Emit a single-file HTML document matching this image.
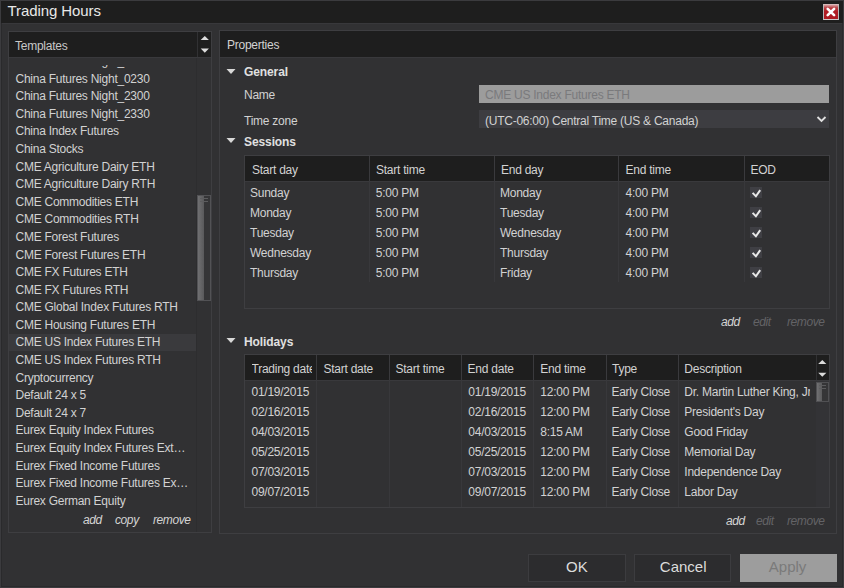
<!DOCTYPE html>
<html><head><meta charset="utf-8"><style>
*{box-sizing:border-box;margin:0;padding:0}
html,body{width:844px;height:588px;overflow:hidden;background:#3b3b3e}
body{position:relative;font-family:"Liberation Sans",sans-serif;font-size:12px;color:#d2d2d2;letter-spacing:-0.25px}
.a{position:absolute}
.t{position:absolute;white-space:nowrap;line-height:14px}
.b{font-weight:bold;color:#e0e0e0;letter-spacing:-0.1px}
.hdr{position:absolute;background:#1e1e1e}
.bd{position:absolute;background:#3e3e41}
.sep{position:absolute;width:1px;background:#3a3a3d}
.lnk{position:absolute;white-space:nowrap;line-height:14px;font-style:italic;letter-spacing:-0.4px}
.on{color:#d4d4d4}
.off{color:#636366}
.tri{position:absolute;width:10px;height:6px}
.cb{position:absolute;width:11.6px;height:11.6px;background:#3f3f44}
</style></head><body>
<div class="a" style="left:1px;top:1px;width:842px;height:586px;background:#2a2a2c"></div>
<div class="a" style="left:2px;top:1px;width:840px;height:585px;background:#313133"></div>
<div class="a" style="left:1px;top:1px;width:842px;height:22px;background:#1e1e1e"></div>
<div class="a" style="left:2px;top:23px;width:840px;height:1px;background:#38383b"></div>
<div class="t" style="left:7.6px;top:2.4px;font-size:15px;line-height:18px;letter-spacing:-0.1px;color:#e8e8e8">Trading Hours</div>
<div class="a" style="left:823px;top:4px;width:16px;height:16px;background:linear-gradient(#d7a0a2,#bb4146 20%,#b01d24 45%,#ad1b22);border:1px solid;border-color:#d8b8b9 #b9b9b9 #cbcbcb #b9b9b9"><svg width="14" height="14" style="position:absolute;left:0;top:0"><path d="M3.7 3.8L10.1 10.2M10.1 3.8L3.7 10.2" stroke="#fff" stroke-width="2.6" stroke-linecap="round"/></svg></div>
<div class="a" style="left:8px;top:31px;width:204px;height:502px;border:1px solid #3e3e41;background:#313133"></div>
<div class="hdr" style="left:9px;top:32px;width:188px;height:25px"></div>
<div class="hdr" style="left:198px;top:32px;width:13px;height:25px"></div>
<div class="a" style="left:9px;top:57px;width:202px;height:1px;background:#39393c"></div>
<div class="t" style="left:15px;top:39.3px;color:#c8c8c8">Templates</div>
<svg class="a" style="left:198px;top:32px" width="13" height="25"><path d="M2.7 8L6.8 3.9L10.9 8Z M2.7 16.6L6.8 20.7L10.9 16.6Z" fill="#dcdcdc"/></svg>
<div class="a" style="left:9px;top:65.4px;width:188px;height:466.6px;overflow:hidden">
<div class="t" style="left:6.5px;top:-11.34px">China Futures Night_0200</div>
<div class="t" style="left:6.5px;top:6.25px">China Futures Night_0230</div>
<div class="t" style="left:6.5px;top:23.84px">China Futures Night_2300</div>
<div class="t" style="left:6.5px;top:41.43px">China Futures Night_2330</div>
<div class="t" style="left:6.5px;top:59.02px">China Index Futures</div>
<div class="t" style="left:6.5px;top:76.61px">China Stocks</div>
<div class="t" style="left:6.5px;top:94.20px">CME Agriculture Dairy ETH</div>
<div class="t" style="left:6.5px;top:111.79px">CME Agriculture Dairy RTH</div>
<div class="t" style="left:6.5px;top:129.38px">CME Commodities ETH</div>
<div class="t" style="left:6.5px;top:146.97px">CME Commodities RTH</div>
<div class="t" style="left:6.5px;top:164.56px">CME Forest Futures</div>
<div class="t" style="left:6.5px;top:182.15px">CME Forest Futures ETH</div>
<div class="t" style="left:6.5px;top:199.74px">CME FX Futures ETH</div>
<div class="t" style="left:6.5px;top:217.33px">CME FX Futures RTH</div>
<div class="t" style="left:6.5px;top:234.92px">CME Global Index Futures RTH</div>
<div class="t" style="left:6.5px;top:252.51px">CME Housing Futures ETH</div>
<div class="a" style="left:0;top:268.15px;width:187px;height:17.59px;background:#3a3a3d"></div>
<div class="t" style="left:6.5px;top:270.10px">CME US Index Futures ETH</div>
<div class="t" style="left:6.5px;top:287.69px">CME US Index Futures RTH</div>
<div class="t" style="left:6.5px;top:305.28px">Cryptocurrency</div>
<div class="t" style="left:6.5px;top:322.87px">Default 24 x 5</div>
<div class="t" style="left:6.5px;top:340.46px">Default 24 x 7</div>
<div class="t" style="left:6.5px;top:358.05px">Eurex Equity Index Futures</div>
<div class="t" style="left:6.5px;top:375.64px">Eurex Equity Index Futures Ext…</div>
<div class="t" style="left:6.5px;top:393.23px">Eurex Fixed Income Futures</div>
<div class="t" style="left:6.5px;top:410.82px">Eurex Fixed Income Futures Ex…</div>
<div class="t" style="left:6.5px;top:428.41px">Eurex German Equity</div>
</div>
<div class="a" style="left:196px;top:58px;width:1px;height:474px;background:#2d2d2f"></div>
<div class="a" style="left:196.8px;top:195px;width:14.4px;height:105.7px;border:1px solid #525255;background:linear-gradient(90deg,#707072,#58585a 6.3px,#353537 6.3px)"></div>
<div class="a" style="left:200px;top:198px;width:8px;height:1px;background:#5c5c5e"></div>
<div class="a" style="left:200px;top:201px;width:8px;height:1px;background:#5c5c5e"></div>
<div class="lnk on" style="left:83px;top:513px">add</div>
<div class="lnk on" style="left:115px;top:513px">copy</div>
<div class="lnk on" style="left:153px;top:513px">remove</div>
<div class="a" style="left:219px;top:30px;width:618px;height:504px;border:1px solid #3e3e41;background:#313133"></div>
<div class="hdr" style="left:220px;top:31px;width:616px;height:26px"></div>
<div class="a" style="left:220px;top:57px;width:616px;height:1px;background:#39393c"></div>
<div class="t" style="left:227px;top:38.3px;color:#d2d2d2">Properties</div>
<svg class="a" style="left:226px;top:68.6px" width="10" height="6"><path d="M0.5 0L9.5 0L5 5Z" fill="#d8d8d8"/></svg>
<div class="t b" style="left:244px;top:64.7px">General</div>
<div class="t" style="left:244px;top:88.3px">Name</div>
<div class="t" style="left:244px;top:113.5px">Time zone</div>
<div class="a" style="left:478.5px;top:85px;width:350.8px;height:18.3px;background:#9c9c9c"></div>
<div class="t" style="left:485px;top:87.5px;color:#7a7a7c">CME US Index Futures ETH</div>
<div class="a" style="left:478.5px;top:110.2px;width:350.8px;height:17.6px;background:#3d3d41"></div>
<div class="t" style="left:485px;top:113.5px">(UTC-06:00) Central Time (US &amp; Canada)</div>
<svg class="a" style="left:815px;top:114px" width="13" height="11"><path d="M2.5 3L6.5 7L10.5 3" stroke="#e0e0e0" stroke-width="1.8" fill="none"/></svg>
<svg class="a" style="left:226px;top:138.4px" width="10" height="6"><path d="M0.5 0L9.5 0L5 5Z" fill="#d8d8d8"/></svg>
<div class="t b" style="left:244px;top:134.7px">Sessions</div>
<div class="a" style="left:244px;top:155px;width:586px;height:154px;border:1px solid #3e3e41"></div>
<div class="hdr" style="left:245px;top:156px;width:584px;height:25px"></div>
<div class="a" style="left:245px;top:181px;width:584px;height:1px;background:#39393c"></div>
<div class="sep" style="left:369px;top:156px;height:25px;background:#3a3a3d"></div>
<div class="sep" style="left:369px;top:181px;height:101px;background:#38383b"></div>
<div class="sep" style="left:494px;top:156px;height:25px;background:#3a3a3d"></div>
<div class="sep" style="left:494px;top:181px;height:101px;background:#38383b"></div>
<div class="sep" style="left:618px;top:156px;height:25px;background:#3a3a3d"></div>
<div class="sep" style="left:618px;top:181px;height:101px;background:#38383b"></div>
<div class="sep" style="left:744px;top:156px;height:25px;background:#3a3a3d"></div>
<div class="sep" style="left:744px;top:181px;height:101px;background:#38383b"></div>
<div class="t" style="left:252px;top:162.6px;color:#d2d2d2">Start day</div>
<div class="t" style="left:376px;top:162.6px;color:#d2d2d2">Start time</div>
<div class="t" style="left:501px;top:162.6px;color:#d2d2d2">End day</div>
<div class="t" style="left:625.5px;top:162.6px;color:#d2d2d2">End time</div>
<div class="t" style="left:750.5px;top:162.6px;color:#d2d2d2">EOD</div>
<div class="t" style="left:250px;top:185.7px">Sunday</div>
<div class="t" style="left:375.8px;top:185.7px">5:00 PM</div>
<div class="t" style="left:500px;top:185.7px">Monday</div>
<div class="t" style="left:625.5px;top:185.7px">4:00 PM</div>
<div class="cb" style="left:750.3px;top:186.5px"><svg width="12" height="12" style="position:absolute;left:0;top:0"><path d="M2.6 5.9L5.9 9.3L10.2 3.2" stroke="#e8e8e8" stroke-width="2" fill="none"/></svg></div>
<div class="t" style="left:250px;top:205.7px">Monday</div>
<div class="t" style="left:375.8px;top:205.7px">5:00 PM</div>
<div class="t" style="left:500px;top:205.7px">Tuesday</div>
<div class="t" style="left:625.5px;top:205.7px">4:00 PM</div>
<div class="cb" style="left:750.3px;top:206.5px"><svg width="12" height="12" style="position:absolute;left:0;top:0"><path d="M2.6 5.9L5.9 9.3L10.2 3.2" stroke="#e8e8e8" stroke-width="2" fill="none"/></svg></div>
<div class="t" style="left:250px;top:225.7px">Tuesday</div>
<div class="t" style="left:375.8px;top:225.7px">5:00 PM</div>
<div class="t" style="left:500px;top:225.7px">Wednesday</div>
<div class="t" style="left:625.5px;top:225.7px">4:00 PM</div>
<div class="cb" style="left:750.3px;top:226.5px"><svg width="12" height="12" style="position:absolute;left:0;top:0"><path d="M2.6 5.9L5.9 9.3L10.2 3.2" stroke="#e8e8e8" stroke-width="2" fill="none"/></svg></div>
<div class="t" style="left:250px;top:245.7px">Wednesday</div>
<div class="t" style="left:375.8px;top:245.7px">5:00 PM</div>
<div class="t" style="left:500px;top:245.7px">Thursday</div>
<div class="t" style="left:625.5px;top:245.7px">4:00 PM</div>
<div class="cb" style="left:750.3px;top:246.5px"><svg width="12" height="12" style="position:absolute;left:0;top:0"><path d="M2.6 5.9L5.9 9.3L10.2 3.2" stroke="#e8e8e8" stroke-width="2" fill="none"/></svg></div>
<div class="t" style="left:250px;top:265.7px">Thursday</div>
<div class="t" style="left:375.8px;top:265.7px">5:00 PM</div>
<div class="t" style="left:500px;top:265.7px">Friday</div>
<div class="t" style="left:625.5px;top:265.7px">4:00 PM</div>
<div class="cb" style="left:750.3px;top:266.5px"><svg width="12" height="12" style="position:absolute;left:0;top:0"><path d="M2.6 5.9L5.9 9.3L10.2 3.2" stroke="#e8e8e8" stroke-width="2" fill="none"/></svg></div>
<div class="lnk on" style="left:721px;top:315px">add</div>
<div class="lnk off" style="left:753px;top:315px">edit</div>
<div class="lnk off" style="left:787px;top:315px">remove</div>
<svg class="a" style="left:226px;top:338.4px" width="10" height="6"><path d="M0.5 0L9.5 0L5 5Z" fill="#d8d8d8"/></svg>
<div class="t b" style="left:244px;top:334.8px">Holidays</div>
<div class="a" style="left:244px;top:354px;width:586px;height:154px;border:1px solid #3e3e41"></div>
<div class="hdr" style="left:245px;top:355px;width:571px;height:25px"></div>
<div class="hdr" style="left:817px;top:355px;width:12px;height:25px"></div>
<div class="a" style="left:245px;top:380px;width:584px;height:1px;background:#39393c"></div>
<svg class="a" style="left:816px;top:355px" width="13" height="25"><path d="M2.2 9.1L6.3 5L10.4 9.1Z M2.2 17.7L6.3 21.8L10.4 17.7Z" fill="#dcdcdc"/></svg>
<div class="sep" style="left:316px;top:355px;height:25px;background:#3a3a3d"></div>
<div class="sep" style="left:316px;top:380px;height:127px;background:#38383b"></div>
<div class="sep" style="left:389px;top:355px;height:25px;background:#3a3a3d"></div>
<div class="sep" style="left:389px;top:380px;height:127px;background:#38383b"></div>
<div class="sep" style="left:461px;top:355px;height:25px;background:#3a3a3d"></div>
<div class="sep" style="left:461px;top:380px;height:127px;background:#38383b"></div>
<div class="sep" style="left:533px;top:355px;height:25px;background:#3a3a3d"></div>
<div class="sep" style="left:533px;top:380px;height:127px;background:#38383b"></div>
<div class="sep" style="left:606px;top:355px;height:25px;background:#3a3a3d"></div>
<div class="sep" style="left:606px;top:380px;height:127px;background:#38383b"></div>
<div class="sep" style="left:678px;top:355px;height:25px;background:#3a3a3d"></div>
<div class="sep" style="left:678px;top:380px;height:127px;background:#38383b"></div>
<div class="t" style="left:251.5px;top:361.6px;color:#d2d2d2;width:60px;overflow:hidden">Trading date</div>
<div class="t" style="left:323.5px;top:361.6px;color:#d2d2d2">Start date</div>
<div class="t" style="left:395.5px;top:361.6px;color:#d2d2d2">Start time</div>
<div class="t" style="left:467.6px;top:361.6px;color:#d2d2d2">End date</div>
<div class="t" style="left:540.3px;top:361.6px;color:#d2d2d2">End time</div>
<div class="t" style="left:612px;top:361.6px;color:#d2d2d2">Type</div>
<div class="t" style="left:684.3px;top:361.6px;color:#d2d2d2">Description</div>
<div class="t" style="left:251.5px;top:385.2px">01/19/2015</div>
<div class="t" style="left:468.3px;top:385.2px">01/19/2015</div>
<div class="t" style="left:540.3px;top:385.2px">12:00 PM</div>
<div class="t" style="left:611.4px;top:385.2px">Early Close</div>
<div class="t" style="left:684.3px;top:385.2px;width:125.5px;overflow:hidden">Dr. Martin Luther King, Jr</div>
<div class="t" style="left:251.5px;top:405.2px">02/16/2015</div>
<div class="t" style="left:468.3px;top:405.2px">02/16/2015</div>
<div class="t" style="left:540.3px;top:405.2px">12:00 PM</div>
<div class="t" style="left:611.4px;top:405.2px">Early Close</div>
<div class="t" style="left:684.3px;top:405.2px;width:125.5px;overflow:hidden">President's Day</div>
<div class="t" style="left:251.5px;top:425.2px">04/03/2015</div>
<div class="t" style="left:468.3px;top:425.2px">04/03/2015</div>
<div class="t" style="left:540.3px;top:425.2px">8:15 AM</div>
<div class="t" style="left:611.4px;top:425.2px">Early Close</div>
<div class="t" style="left:684.3px;top:425.2px;width:125.5px;overflow:hidden">Good Friday</div>
<div class="t" style="left:251.5px;top:445.2px">05/25/2015</div>
<div class="t" style="left:468.3px;top:445.2px">05/25/2015</div>
<div class="t" style="left:540.3px;top:445.2px">12:00 PM</div>
<div class="t" style="left:611.4px;top:445.2px">Early Close</div>
<div class="t" style="left:684.3px;top:445.2px;width:125.5px;overflow:hidden">Memorial Day</div>
<div class="t" style="left:251.5px;top:465.2px">07/03/2015</div>
<div class="t" style="left:468.3px;top:465.2px">07/03/2015</div>
<div class="t" style="left:540.3px;top:465.2px">12:00 PM</div>
<div class="t" style="left:611.4px;top:465.2px">Early Close</div>
<div class="t" style="left:684.3px;top:465.2px;width:125.5px;overflow:hidden">Independence Day</div>
<div class="t" style="left:251.5px;top:485.2px">09/07/2015</div>
<div class="t" style="left:468.3px;top:485.2px">09/07/2015</div>
<div class="t" style="left:540.3px;top:485.2px">12:00 PM</div>
<div class="t" style="left:611.4px;top:485.2px">Early Close</div>
<div class="t" style="left:684.3px;top:485.2px;width:125.5px;overflow:hidden">Labor Day</div>
<div class="a" style="left:816px;top:381px;width:13px;height:126px;background:#333336"></div>
<div class="a" style="left:816px;top:381.6px;width:13px;height:20.2px;border:1px solid #505053;background:linear-gradient(90deg,#707072,#58585a 5.5px,#353537 5.5px)"></div>
<div class="a" style="left:819px;top:385px;width:7px;height:1px;background:#5c5c5e"></div>
<div class="a" style="left:819px;top:388px;width:7px;height:1px;background:#5c5c5e"></div>
<div class="lnk on" style="left:726px;top:514px">add</div>
<div class="lnk off" style="left:756px;top:514px">edit</div>
<div class="lnk off" style="left:787px;top:514px">remove</div>
<div class="a" style="left:528px;top:554px;width:98px;height:27.5px;background:#2c2c2e;border:1px solid #3c3c3f"></div>
<div class="a" style="left:634px;top:554px;width:97px;height:27.5px;background:#2c2c2e;border:1px solid #3c3c3f"></div>
<div class="a" style="left:739.6px;top:554px;width:97.2px;height:27.5px;background:#9d9d9d"></div>
<div class="t" style="left:566px;top:558.3px;font-size:15px;line-height:18px;letter-spacing:0;color:#dcdcdc">OK</div>
<div class="t" style="left:659.8px;top:558.3px;font-size:15px;line-height:18px;letter-spacing:0;color:#dcdcdc">Cancel</div>
<div class="t" style="left:768.8px;top:558.3px;font-size:15px;line-height:18px;letter-spacing:0;color:#7a7a7a">Apply</div>
</body></html>
